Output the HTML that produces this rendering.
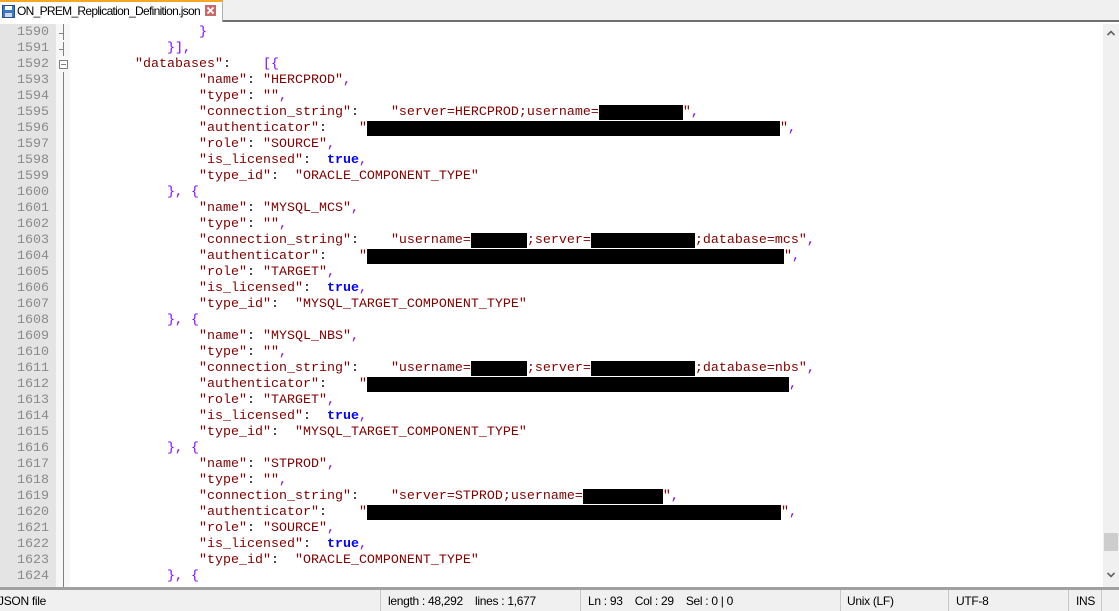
<!DOCTYPE html>
<html><head><meta charset="utf-8"><style>
*{margin:0;padding:0;box-sizing:border-box}
body{width:1119px;height:611px;overflow:hidden;background:#fff;font-family:"Liberation Sans",sans-serif;position:relative}
#tabbar{position:absolute;left:0;top:0;width:1119px;height:22px;background:#f0f0f0;border-bottom:2px solid #6f6f6f}
#tab{position:absolute;left:0;top:0;height:22px;width:223px;background:#fff;border-right:1px solid #b0b0b0;border-top:2px solid #f5a623;font-size:12px;line-height:19px;padding-left:17px;color:#000;letter-spacing:-0.7px;white-space:nowrap;overflow:hidden}
#gut{position:absolute;left:0;top:24px;width:56px;height:563px;background:#e4e4e4}
#fold{position:absolute;left:56px;top:24px;width:14px;height:563px;background:repeating-linear-gradient(45deg,#f3f3f3 0 1px,#fbfbfb 1px 2px)}
#code{position:absolute;left:0;top:25px;width:1103px;height:562px;overflow:hidden}
.l{height:16px;position:relative;white-space:pre}
.n{position:absolute;left:0;top:0;height:16px;width:49px;text-align:right;font:13.33px/16px "Liberation Mono",monospace;color:#8a8a8a}
.t{position:absolute;left:71px;top:0;height:16px;font:13.33px/16px "Liberation Mono",monospace;tab-size:4;-moz-tab-size:4;color:#000;white-space:pre}
.s{color:#800000}.p{color:#8000ff}.b{color:#0000ff;font-weight:bold}
.r{display:inline-block;background:#000;height:15px;vertical-align:top;margin-top:0px}
.fl{position:absolute;left:63px;width:1px;background:#808080}
#sb{position:absolute;left:1103px;top:24px;width:16px;height:563px;background:#f0f0f0}
#status{position:absolute;left:0;top:587px;width:1119px;height:24px;background:#f0f0f0;border-top:3px solid #a0a0a0;font-size:12px;color:#000;letter-spacing:-0.3px}
#status span{position:absolute;top:4px}
.sep{position:absolute;top:0;width:1px;height:21px;background:#c8c8c8}
</style></head><body>
<div id="tabbar"><div id="tab">
<svg style="position:absolute;left:2px;top:3px" width="13" height="13" viewBox="0 0 13 13"><rect x="0.5" y="0.5" width="12" height="12" fill="#3a78c8" stroke="#24508a"/><rect x="3" y="1" width="7" height="4" fill="#fff"/><rect x="3" y="8" width="7" height="4" fill="#cfd8e4"/></svg>
ON_PREM_Replication_Definition.json
</div>
<svg style="position:absolute;left:205px;top:5px" width="11" height="11" viewBox="0 0 11 11"><rect width="11" height="11" fill="#c96a6a"/><path d="M2.5 2.5L8.5 8.5M8.5 2.5L2.5 8.5" stroke="#fff" stroke-width="1.8"/></svg>
</div>
<div id="gut"></div><div id="fold"></div>
<div class="fl" style="top:24px;height:16px"></div>
<div class="fl" style="top:42px;height:14px"></div>
<div class="fl" style="top:72px;height:515px"></div>
<div style="position:absolute;left:59px;top:33px;width:5px;height:1px;background:#808080"></div>
<div style="position:absolute;left:59px;top:49px;width:5px;height:1px;background:#808080"></div>
<div style="position:absolute;left:59px;top:60px;width:9px;height:9px;border:1px solid #808080;background:#fff"><div style="position:absolute;left:1px;top:3px;width:5px;height:1px;background:#808080"></div></div>
<div id="code">
<div class="l"><span class="n">1590</span><span class="t">				<span class="p">}</span></span></div>
<div class="l"><span class="n">1591</span><span class="t">			<span class="p">}],</span></span></div>
<div class="l"><span class="n">1592</span><span class="t">		<span class="s">"databases"</span>:	<span class="p">[{</span></span></div>
<div class="l"><span class="n">1593</span><span class="t">				<span class="s">"name"</span>: <span class="s">"HERCPROD"</span><span class="p">,</span></span></div>
<div class="l"><span class="n">1594</span><span class="t">				<span class="s">"type"</span>: <span class="s">""</span><span class="p">,</span></span></div>
<div class="l"><span class="n">1595</span><span class="t">				<span class="s">"connection_string"</span>:	<span class="s">"server=HERCPROD;username=<span class="r" style="width:84px"></span>"</span><span class="p">,</span></span></div>
<div class="l"><span class="n">1596</span><span class="t">				<span class="s">"authenticator"</span>:	<span class="s">"<span class="r" style="width:413px"></span>"</span><span class="p">,</span></span></div>
<div class="l"><span class="n">1597</span><span class="t">				<span class="s">"role"</span>: <span class="s">"SOURCE"</span><span class="p">,</span></span></div>
<div class="l"><span class="n">1598</span><span class="t">				<span class="s">"is_licensed"</span>:	<span class="b">true</span><span class="p">,</span></span></div>
<div class="l"><span class="n">1599</span><span class="t">				<span class="s">"type_id"</span>:	<span class="s">"ORACLE_COMPONENT_TYPE"</span></span></div>
<div class="l"><span class="n">1600</span><span class="t">			<span class="p">}, {</span></span></div>
<div class="l"><span class="n">1601</span><span class="t">				<span class="s">"name"</span>: <span class="s">"MYSQL_MCS"</span><span class="p">,</span></span></div>
<div class="l"><span class="n">1602</span><span class="t">				<span class="s">"type"</span>: <span class="s">""</span><span class="p">,</span></span></div>
<div class="l"><span class="n">1603</span><span class="t">				<span class="s">"connection_string"</span>:	<span class="s">"username=<span class="r" style="width:56px"></span>;server=<span class="r" style="width:104px"></span>;database=mcs"</span><span class="p">,</span></span></div>
<div class="l"><span class="n">1604</span><span class="t">				<span class="s">"authenticator"</span>:	<span class="s">"<span class="r" style="width:417px"></span>"</span><span class="p">,</span></span></div>
<div class="l"><span class="n">1605</span><span class="t">				<span class="s">"role"</span>: <span class="s">"TARGET"</span><span class="p">,</span></span></div>
<div class="l"><span class="n">1606</span><span class="t">				<span class="s">"is_licensed"</span>:	<span class="b">true</span><span class="p">,</span></span></div>
<div class="l"><span class="n">1607</span><span class="t">				<span class="s">"type_id"</span>:	<span class="s">"MYSQL_TARGET_COMPONENT_TYPE"</span></span></div>
<div class="l"><span class="n">1608</span><span class="t">			<span class="p">}, {</span></span></div>
<div class="l"><span class="n">1609</span><span class="t">				<span class="s">"name"</span>: <span class="s">"MYSQL_NBS"</span><span class="p">,</span></span></div>
<div class="l"><span class="n">1610</span><span class="t">				<span class="s">"type"</span>: <span class="s">""</span><span class="p">,</span></span></div>
<div class="l"><span class="n">1611</span><span class="t">				<span class="s">"connection_string"</span>:	<span class="s">"username=<span class="r" style="width:56px"></span>;server=<span class="r" style="width:104px"></span>;database=nbs"</span><span class="p">,</span></span></div>
<div class="l"><span class="n">1612</span><span class="t">				<span class="s">"authenticator"</span>:	<span class="s">"<span class="r" style="width:422px"></span></span><span class="p">,</span></span></div>
<div class="l"><span class="n">1613</span><span class="t">				<span class="s">"role"</span>: <span class="s">"TARGET"</span><span class="p">,</span></span></div>
<div class="l"><span class="n">1614</span><span class="t">				<span class="s">"is_licensed"</span>:	<span class="b">true</span><span class="p">,</span></span></div>
<div class="l"><span class="n">1615</span><span class="t">				<span class="s">"type_id"</span>:	<span class="s">"MYSQL_TARGET_COMPONENT_TYPE"</span></span></div>
<div class="l"><span class="n">1616</span><span class="t">			<span class="p">}, {</span></span></div>
<div class="l"><span class="n">1617</span><span class="t">				<span class="s">"name"</span>: <span class="s">"STPROD"</span><span class="p">,</span></span></div>
<div class="l"><span class="n">1618</span><span class="t">				<span class="s">"type"</span>: <span class="s">""</span><span class="p">,</span></span></div>
<div class="l"><span class="n">1619</span><span class="t">				<span class="s">"connection_string"</span>:	<span class="s">"server=STPROD;username=<span class="r" style="width:80px"></span>"</span><span class="p">,</span></span></div>
<div class="l"><span class="n">1620</span><span class="t">				<span class="s">"authenticator"</span>:	<span class="s">"<span class="r" style="width:414px"></span>"</span><span class="p">,</span></span></div>
<div class="l"><span class="n">1621</span><span class="t">				<span class="s">"role"</span>: <span class="s">"SOURCE"</span><span class="p">,</span></span></div>
<div class="l"><span class="n">1622</span><span class="t">				<span class="s">"is_licensed"</span>:	<span class="b">true</span><span class="p">,</span></span></div>
<div class="l"><span class="n">1623</span><span class="t">				<span class="s">"type_id"</span>:	<span class="s">"ORACLE_COMPONENT_TYPE"</span></span></div>
<div class="l"><span class="n">1624</span><span class="t">			<span class="p">}, {</span></span></div>
</div>
<div id="sb">
<svg style="position:absolute;left:4px;top:6px" width="8" height="6" viewBox="0 0 8 6"><path d="M0.5 5L4 1.5L7.5 5" stroke="#606060" stroke-width="1.6" fill="none"/></svg>
<div style="position:absolute;left:1px;top:509px;width:14px;height:18px;background:#cdcdcd"></div>
<svg style="position:absolute;left:4px;top:548px" width="8" height="6" viewBox="0 0 8 6"><path d="M0.5 1L4 4.5L7.5 1" stroke="#606060" stroke-width="1.6" fill="none"/></svg>
</div>
<div id="status">
<span style="left:-2px">JSON file</span>
<div class="sep" style="left:380px"></div>
<span style="left:388px">length : 48,292&nbsp;&nbsp;&nbsp; lines : 1,677</span>
<div class="sep" style="left:580px"></div>
<span style="left:588px">Ln : 93&nbsp;&nbsp;&nbsp; Col : 29&nbsp;&nbsp;&nbsp; Sel : 0 | 0</span>
<div class="sep" style="left:840px"></div>
<span style="left:847px">Unix (LF)</span>
<div class="sep" style="left:948px"></div>
<span style="left:956px">UTF-8</span>
<div class="sep" style="left:1068px"></div>
<span style="left:1076px">INS</span>
<div class="sep" style="left:1101px"></div>
</div>
</body></html>
